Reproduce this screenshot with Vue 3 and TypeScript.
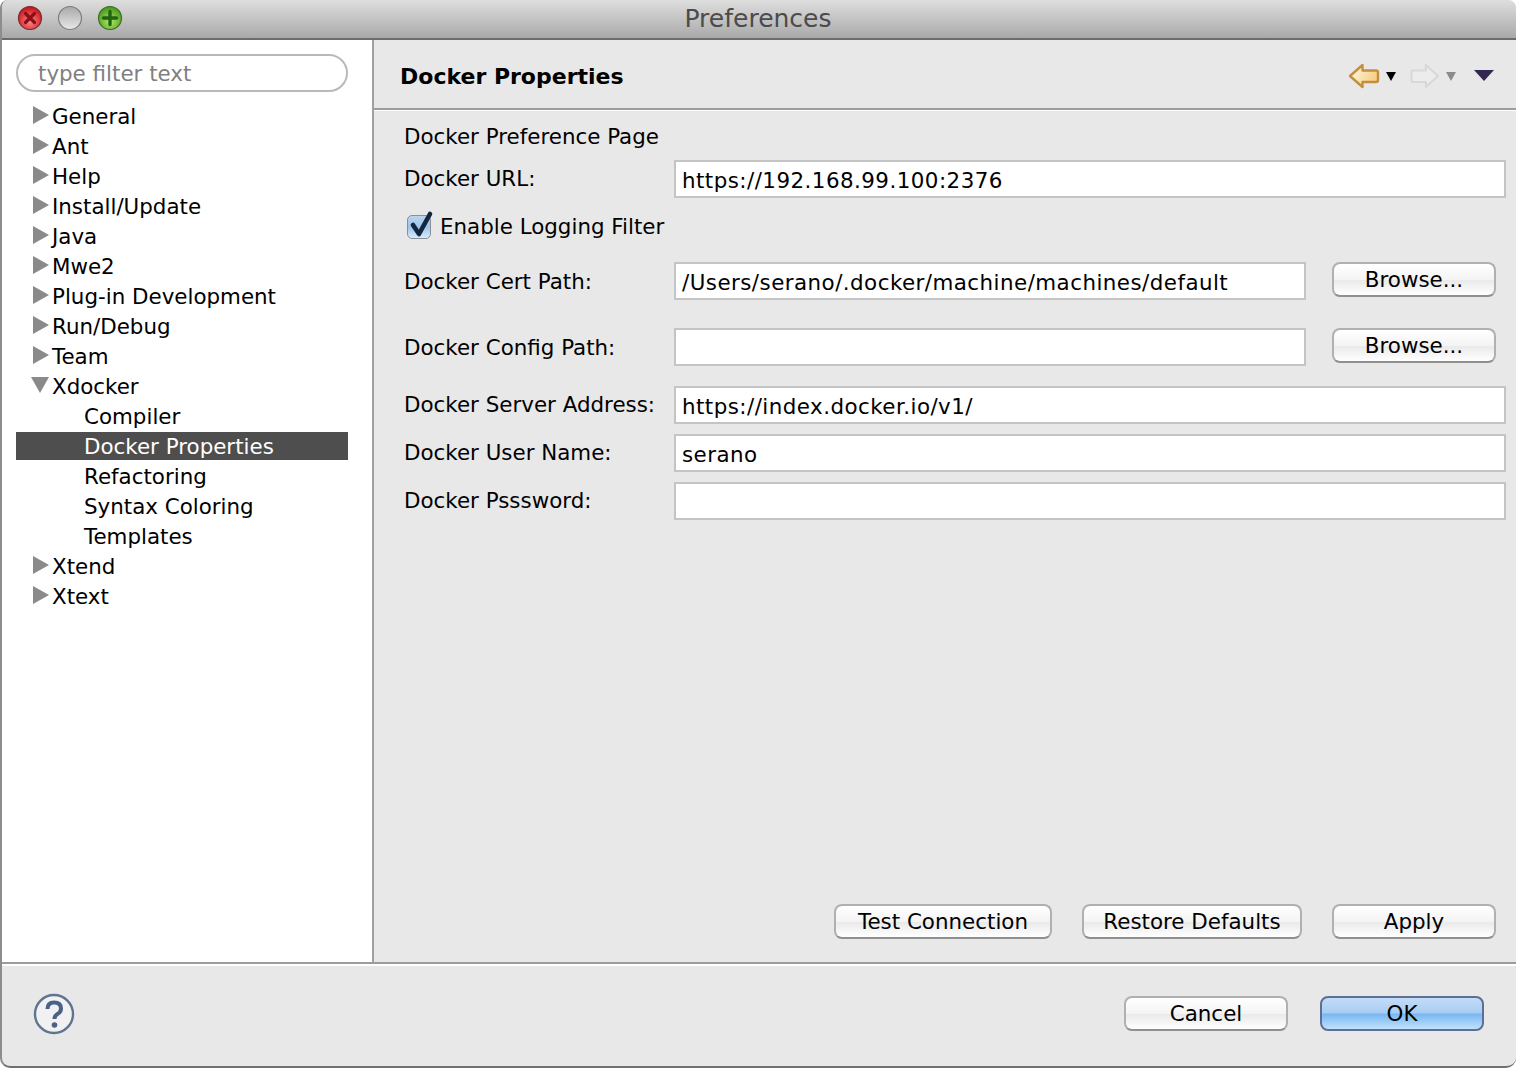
<script setup lang="ts">
interface TreeRow { label: string; state?: 'closed' | 'open'; selected?: boolean }
const rows: TreeRow[] = [
  { label: 'General', state: 'closed' },
  { label: 'Ant', state: 'closed' },
  { label: 'Help', state: 'closed' },
  { label: 'Install/Update', state: 'closed' },
  { label: 'Java', state: 'closed' },
  { label: 'Mwe2', state: 'closed' },
  { label: 'Plug-in Development', state: 'closed' },
  { label: 'Run/Debug', state: 'closed' },
  { label: 'Team', state: 'closed' },
  { label: 'Xdocker', state: 'open' },
  { label: 'Compiler' },
  { label: 'Docker Properties', selected: true },
  { label: 'Refactoring' },
  { label: 'Syntax Coloring' },
  { label: 'Templates' },
  { label: 'Xtend', state: 'closed' },
  { label: 'Xtext', state: 'closed' },
]
</script>

<template>
  <div class="window">
    <header class="titlebar">
      <div class="lights">
        <svg width="28" height="28" viewBox="0 0 28 28">
          <defs>
            <radialGradient id="red" cx="50%" cy="65%" r="60%"><stop offset="0" stop-color="#f88"/><stop offset="1" stop-color="#c8171f"/></radialGradient>
            <radialGradient id="grn" cx="50%" cy="65%" r="60%"><stop offset="0" stop-color="#b5e86a"/><stop offset="1" stop-color="#4a9a1e"/></radialGradient>
            <linearGradient id="gry" x1="0" y1="0" x2="0" y2="1"><stop offset="0" stop-color="#a8a8a8"/><stop offset="1" stop-color="#e8e8e8"/></linearGradient>
          </defs>
          <circle cx="14" cy="14" r="11.5" fill="url(#red)" stroke="#7d2a2e" stroke-width="1.2"/>
          <path d="M9.5 9.5l9 9M18.5 9.5l-9 9" stroke="#8a1015" stroke-width="3.2" stroke-linecap="round"/>
        </svg>
        <svg width="28" height="28" viewBox="0 0 28 28">
          <circle cx="14" cy="14" r="11.5" fill="url(#gry)" stroke="#7c7c7c" stroke-width="1.2"/>
        </svg>
        <svg width="28" height="28" viewBox="0 0 28 28">
          <circle cx="14" cy="14" r="11.5" fill="url(#grn)" stroke="#3d6e22" stroke-width="1.2"/>
          <path d="M14 7.5v13M7.5 14h13" stroke="#1f6410" stroke-width="3.4" stroke-linecap="round"/>
        </svg>
      </div>
      <span class="title">Preferences</span>
    </header>

    <div class="body">
      <aside class="sidebar">
        <div class="filter">type filter text</div>
        <ul class="tree">
          <li v-for="row in rows" :key="row.label" class="row" :class="{ selected: row.selected, child: !row.state }">
            <svg v-if="row.state === 'closed'" class="twisty" width="16" height="18" viewBox="0 0 16 18"><path d="M0 0L16 9L0 18Z" fill="#8a8a8a"/></svg>
            <svg v-else-if="row.state === 'open'" class="twisty open" width="18" height="16" viewBox="0 0 18 16"><path d="M0 0H18L9 16Z" fill="#8a8a8a"/></svg>
            <span class="row-label">{{ row.label }}</span>
          </li>
        </ul>
      </aside>

      <main class="content">
        <div class="page-head">
          <h1>Docker Properties</h1>
          <div class="nav">
            <svg width="32" height="26" viewBox="0 0 32 26">
              <defs><linearGradient id="arrow" x1="0" y1="0" x2="1" y2="0.4"><stop offset="0" stop-color="#fffbe8"/><stop offset="1" stop-color="#f6cf85"/></linearGradient></defs>
              <path d="M2 13L14.5 2V7.5H28Q30 7.5 30 9.5V17Q30 19 28 19H14.5V24Z" fill="url(#arrow)" stroke="#c48f3e" stroke-width="2.4" stroke-linejoin="round"/>
            </svg>
            <svg class="drop" width="10" height="9" viewBox="0 0 10 9"><path d="M0 0H10L5 9Z" fill="#000"/></svg>
            <svg class="fwd" width="30" height="26" viewBox="0 0 30 26">
              <path d="M28 13L16 2V7.5H3Q1.5 7.5 1.5 9.5V17Q1.5 19 3 19H16V24Z" fill="#ececec" stroke="#d8d8d8" stroke-width="2.2" stroke-linejoin="round"/>
            </svg>
            <svg class="drop" width="10" height="9" viewBox="0 0 10 9"><path d="M0 0H10L5 9Z" fill="#8b8b8b"/></svg>
            <svg class="menu" width="20" height="11" viewBox="0 0 20 11"><path d="M0 0H20L10 11Z" fill="#33264f"/></svg>
          </div>
        </div>

        <div class="form">
          <div class="intro">Docker Preference Page</div>

          <div class="field url">
            <label>Docker URL:</label>
            <div class="input">https://192.168.99.100:2376</div>
          </div>

          <div class="check">
            <span class="box">
              <svg width="30" height="34" viewBox="0 0 30 34"><path d="M8 19L14 28L25 8" fill="none" stroke="#13263f" stroke-width="4.6" stroke-linecap="round" stroke-linejoin="round"/></svg>
            </span>
            <span>Enable Logging Filter</span>
          </div>

          <div class="field cert">
            <label>Docker Cert Path:</label>
            <div class="input">/Users/serano/.docker/machine/machines/default</div>
            <button class="btn browse">Browse...</button>
          </div>

          <div class="field config">
            <label>Docker Config Path:</label>
            <div class="input"></div>
            <button class="btn browse">Browse...</button>
          </div>

          <div class="field server">
            <label>Docker Server Address:</label>
            <div class="input">https://index.docker.io/v1/</div>
          </div>

          <div class="field user">
            <label>Docker User Name:</label>
            <div class="input">serano</div>
          </div>

          <div class="field pass">
            <label>Docker Psssword:</label>
            <div class="input"></div>
          </div>

          <div class="actions">
            <button class="btn test">Test Connection</button>
            <button class="btn restore">Restore Defaults</button>
            <button class="btn browse">Apply</button>
          </div>
        </div>
      </main>
    </div>

    <footer class="footer">
      <svg class="help" width="44" height="44" viewBox="0 0 44 44">
        <circle cx="22" cy="22" r="19" fill="#f1f1f1" stroke="#5f7491" stroke-width="2.4"/>
        <path d="M15.5 17Q15.5 10.5 22 10.5Q29 10.5 29 16.5Q29 20 25.5 22Q22.5 23.8 22.5 27" fill="none" stroke="#4a6287" stroke-width="4"/>
        <circle cx="22.5" cy="33" r="2.8" fill="#4a6287"/>
      </svg>
      <div class="footer-actions">
        <button class="btn browse">Cancel</button>
        <button class="btn browse ok">OK</button>
      </div>
    </footer>
  </div>
</template>

<style>
html, body { margin: 0; background: #fff; }
</style>

<style scoped>
.window {
  width: 1516px;
  height: 1068px;
  box-sizing: border-box;
  display: flex;
  flex-direction: column;
  background: #e8e8e8;
  color: #000;
  font-family: "DejaVu Sans", sans-serif;
  font-size: 21.4px;
  overflow: hidden;
  border-left: 2px solid #8d8d8d;
  border-bottom: 2px solid #707070;
  border-radius: 8px 8px 10px 10px;
}
.titlebar {
  height: 40px;
  flex: none;
  box-sizing: border-box;
  position: relative;
  display: flex;
  align-items: center;
  justify-content: center;
  background: linear-gradient(#dedede, #a9a9a9);
  border-bottom: 2px solid #6c6c6c;
  margin-left: -2px;
}
.lights {
  position: absolute;
  left: 16px;
  top: 4px;
  display: flex;
  gap: 12px;
}
.title { color: #4b4b4b; font-size: 25px; padding-bottom: 2px; }
.body { flex: 1; display: flex; min-height: 0; }
.sidebar {
  width: 370px;
  flex: none;
  box-sizing: border-box;
  background: #fff;
  padding: 14px 24px 0 14px;
}
.filter {
  height: 38px;
  box-sizing: border-box;
  border: 2px solid #b9b9b9;
  border-radius: 19px;
  padding-left: 20px;
  line-height: 36px;
  color: #808080;
  width: 332px;
}
.tree { list-style: none; margin: 9px 0 0; padding: 0; }
.row {
  height: 30px;
  display: flex;
  align-items: center;
  position: relative;
  width: 332px;
  white-space: nowrap;
}
.twisty { position: absolute; left: 17px; top: 5px; }
.twisty.open { left: 15px; top: 6px; }
.row-label { margin-left: 36px; }
.row.child .row-label { margin-left: 68px; }
.row.selected { color: #fff; }
.row.selected::before {
  content: "";
  position: absolute;
  left: 0;
  right: 0;
  top: 1px;
  bottom: 1px;
  background: #4e4e4e;
}
.row.selected .row-label { position: relative; }
.content {
  flex: 1;
  display: flex;
  flex-direction: column;
  border-left: 2px solid #a0a0a0;
}
.page-head {
  height: 70px;
  flex: none;
  box-sizing: border-box;
  display: flex;
  align-items: center;
  justify-content: space-between;
  padding: 4px 22px 0 26px;
  border-bottom: 2px solid #9c9c9c;
  box-shadow: 0 1px 0 #fff;
}
h1 { margin: 0; font-size: 22px; font-weight: 700; }
.nav { display: flex; align-items: center; }
.nav .drop { margin-left: 6px; }
.nav .fwd { margin-left: 14px; }
.nav .menu { margin-left: 18px; margin-top: -2px; }
.form {
  flex: 1;
  display: flex;
  flex-direction: column;
  padding: 13px 10px 23px 30px;
  min-height: 0;
}
.intro { height: 26px; line-height: 28px; }
.field { display: flex; align-items: flex-start; }
.field label { width: 270px; flex: none; white-space: nowrap; line-height: 30px; }
.input {
  flex: 1;
  height: 38px;
  box-sizing: border-box;
  background: #fff;
  border: 2px solid #c4c4c4;
  padding-left: 6px;
  line-height: 37px;
  letter-spacing: 0.46px;
  white-space: nowrap;
}
.url { margin-top: 11px; }
.url label { line-height: 38px; }
.check {
  margin-top: 10px;
  height: 36px;
  display: flex;
  align-items: center;
  gap: 9px;
  padding-left: 3px;
}
.box {
  position: relative;
  width: 24px;
  height: 24px;
  margin-top: 1px;
  box-sizing: border-box;
  border: 1px solid #8d8f96;
  border-radius: 5px;
  background: linear-gradient(#bcd3ec, #9dc4ec 50%, #d5ebfb);
}
.box svg { position: absolute; left: -3px; top: -10px; }
.cert { margin-top: 18px; }
.cert label { line-height: 40px; height: 40px; }
.config { margin-top: 26px; }
.config label { line-height: 40px; height: 40px; }
.server { margin-top: 18px; }
.server label { line-height: 38px; }
.user { margin-top: 10px; }
.user label { line-height: 38px; }
.pass { margin-top: 10px; }
.pass label { line-height: 38px; }
.btn {
  height: 35px;
  box-sizing: border-box;
  padding: 0;
  border: 2px solid #b0b0b0;
  border-bottom-color: #8f8f8f;
  border-radius: 8px;
  background: linear-gradient(#ffffff, #f4f4f4 50%, #e9e9e9 52%, #ffffff);
  font: inherit;
  color: #000;
  line-height: 31px;
  white-space: nowrap;
}
.browse { width: 164px; flex: none; }
.field .browse { margin-left: 26px; margin-right: 10px; }
.actions {
  margin-top: auto;
  margin-right: 10px;
  display: flex;
  justify-content: flex-end;
  gap: 30px;
}
.test { width: 218px; }
.restore { width: 220px; }
.footer {
  flex: none;
  height: 104px;
  box-sizing: border-box;
  display: flex;
  align-items: center;
  justify-content: space-between;
  border-top: 2px solid #9c9c9c;
  box-shadow: inset 0 2px 0 #fff;
  padding: 0 32px 0 30px;
}
.help { display: block; margin-bottom: 2px; }
.footer-actions { display: flex; gap: 32px; margin-bottom: 4px; }
.ok {
  border-color: #5c6f96;
  background: linear-gradient(#c3dcf6, #a8cdf3 48%, #79b7f2 52%, #bfe2fb);
}
</style>
